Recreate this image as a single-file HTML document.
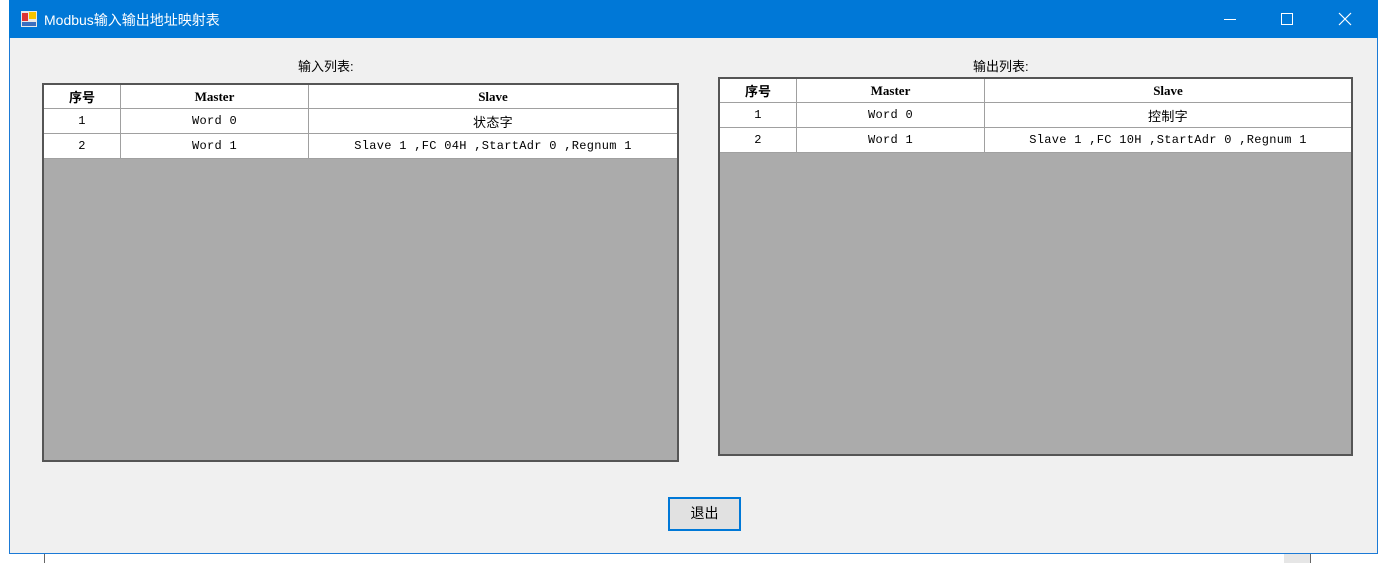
<!DOCTYPE html>
<html><head><meta charset="utf-8"><style>
*{margin:0;padding:0;box-sizing:border-box}
body{width:1386px;height:563px;background:#fff;position:relative;overflow:hidden;font-family:"Liberation Sans","Noto Sans CJK SC",sans-serif}
.abs{position:absolute}
.win{left:9px;top:0;width:1369px;height:554px;background:#f0f0f0;border:1px solid #1b7ad6}
.title{left:9px;top:0;width:1369px;height:38px;background:#0078d7;color:#fff;font-size:14px}
table{border-collapse:collapse;background:#fff;font-family:"Liberation Mono","Noto Serif CJK SC",monospace;font-size:12px;margin:-1px 0 0 -1px}
td{border:1px solid #a0a0a0;height:25px;text-align:center;padding:0;letter-spacing:0.3px}
th{border:1px solid #a0a0a0;height:24px;font-size:13px;font-family:"Liberation Serif","Noto Sans CJK SC",serif;font-weight:bold}
.grid{background:#ababab;border:2px solid #555;overflow:hidden}
.lbl{font-size:13px;color:#000;font-family:"Liberation Sans","Noto Sans CJK SC",sans-serif}
</style></head><body>
<div class="abs" style="left:44px;top:554px;width:1px;height:9px;background:#666"></div>
<div class="abs" style="left:1284px;top:554px;width:27px;height:9px;background:#e6e6e6;border-right:1px solid #666"></div>
<div class="abs win"></div>
<div class="abs title">
  <div class="abs" style="left:12px;top:11px;width:16px;height:16px;background:#e8e8e8">
    <div class="abs" style="left:1px;top:2px;width:6px;height:8px;background:#d33"></div>
    <div class="abs" style="left:8px;top:1px;width:7px;height:7px;background:#f5c400"></div>
    <div class="abs" style="left:1px;top:11px;width:14px;height:4px;background:#3a6fc0"></div>
  </div>
  <div class="abs" style="left:35px;top:10px">Modbus输入输出地址映射表</div>
  <div class="abs" style="left:1215px;top:19px;width:12px;height:1px;background:#fff"></div>
  <div class="abs" style="left:1272px;top:13px;width:12px;height:12px;border:1px solid #fff"></div>
  <svg class="abs" style="left:1329px;top:12px" width="14" height="14"><path d="M1 1L13 13M13 1L1 13" stroke="#fff" stroke-width="1.2"/></svg>
</div>
<div class="abs lbl" style="left:298px;top:56px">输入列表:</div>
<div class="abs lbl" style="left:973px;top:56px">输出列表:</div>

<div class="abs grid" style="left:42px;top:83px;width:637px;height:379px">
<table style="width:635px">
<tr><th style="width:77px">序号</th><th style="width:188px">Master</th><th>Slave</th></tr>
<tr><td>1</td><td>Word 0</td><td style="font-family:'Noto Sans CJK SC',sans-serif;font-size:13px">状态字</td></tr>
<tr><td>2</td><td>Word 1</td><td>Slave 1 ,FC 04H ,StartAdr 0 ,Regnum 1</td></tr>
</table></div>

<div class="abs grid" style="left:718px;top:77px;width:635px;height:379px">
<table style="width:633px">
<tr><th style="width:77px">序号</th><th style="width:188px">Master</th><th>Slave</th></tr>
<tr><td>1</td><td>Word 0</td><td style="font-family:'Noto Sans CJK SC',sans-serif;font-size:13px">控制字</td></tr>
<tr><td>2</td><td>Word 1</td><td>Slave 1 ,FC 10H ,StartAdr 0 ,Regnum 1</td></tr>
</table></div>

<div class="abs lbl" style="left:668px;top:497px;width:73px;height:34px;border:2px solid #0078d7;background:#e1e1e1;text-align:center;line-height:29px;font-size:14px">退出</div>
</body></html>
